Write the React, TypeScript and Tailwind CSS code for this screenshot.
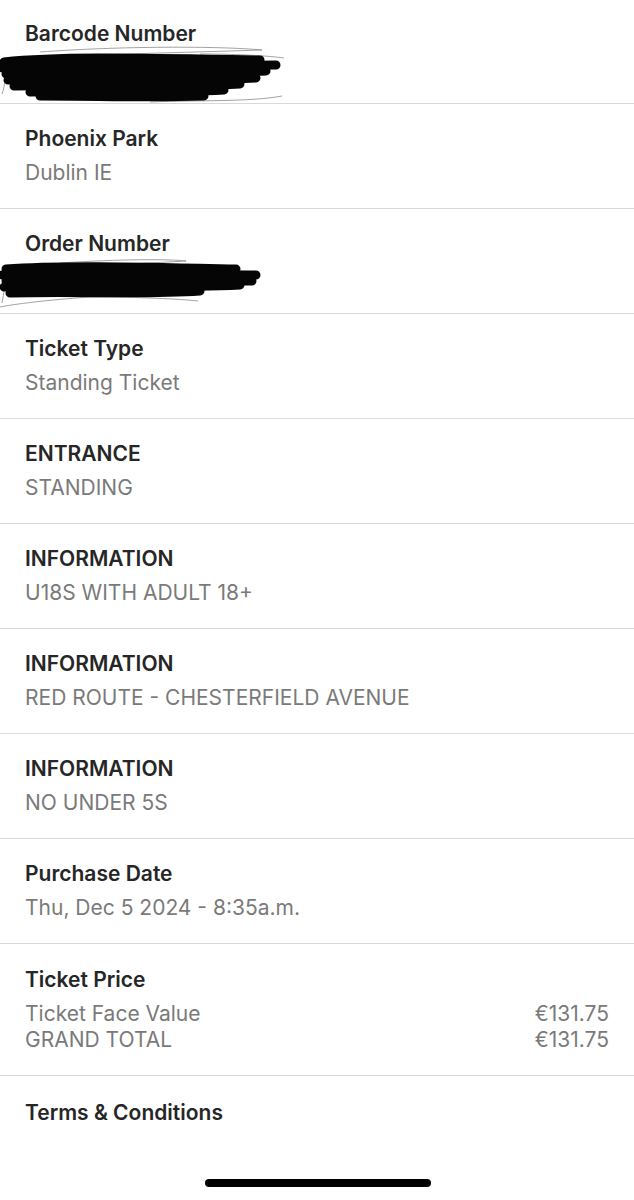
import React from "react";

const font = { fontFamily: "Inter, 'Noto Sans', Arial, sans-serif" };

function Scribble({ width, variant }: { width: number; variant: "a" | "b" }) {
  // a hand-drawn redaction mark
  const heavy =
    variant === "a"
      ? [
          "M4 18 C60 12 140 14 260 16",
          "M2 24 C80 20 170 22 276 21",
          "M6 30 C90 26 180 30 266 27",
          "M8 36 C70 34 160 38 256 34",
          "M14 42 C80 40 150 44 240 40",
          "M30 48 C90 46 150 50 224 46",
          "M40 52 C100 52 150 54 204 52",
        ]
      : [
          "M6 12 C60 8 140 10 236 12",
          "M2 18 C80 14 170 18 256 18",
          "M6 24 C90 20 180 24 252 24",
          "M4 30 C70 28 160 32 240 28",
          "M10 36 C80 34 140 38 200 34",
        ];
  const thin =
    variant === "a"
      ? [
          "M40 8 C120 2 220 2 262 6 C200 8 120 10 60 12",
          "M2 50 C6 40 4 30 10 24",
          "M150 58 C200 56 250 58 282 52",
          "M200 10 C240 10 270 12 284 14",
        ]
      : [
          "M60 6 C120 2 170 2 186 4 C150 6 110 8 70 10",
          "M0 50 C20 46 60 42 90 40 C140 40 180 42 198 44",
          "M2 46 C4 36 4 28 8 22",
        ];
  return (
    <svg width={width} height={60} viewBox={`0 0 ${width} 60`} className="block">
      {thin.map((d, i) => (
        <path key={"t" + i} d={d} fill="none" stroke="#8a8a8a" strokeWidth={0.8} />
      ))}
      {heavy.map((d, i) => (
        <path key={"h" + i} d={d} fill="none" stroke="#050505" strokeWidth={9} strokeLinecap="round" />
      ))}
    </svg>
  );
}

function Row({ title, value }: { title: string; value: string }) {
  return (
    <div className="h-[105px] border-b border-[#d9d9d9] pl-[25px] pt-[23px]">
      <div className="text-[21px] leading-6 font-semibold text-[#262626]">{title}</div>
      <div className="mt-[10px] text-[21px] leading-6 text-[#7a7a7a]">{value}</div>
    </div>
  );
}

function Redacted({ title, variant, width, top }: { title: string; variant: "a" | "b"; width: number; top: string }) {
  return (
    <div className="relative h-[105px] border-b border-[#d9d9d9] pl-[25px] pt-[23px]">
      <div className="text-[21px] leading-6 font-semibold text-[#262626]">{title}</div>
      <div className={"absolute left-0 " + top}>
        <Scribble width={width} variant={variant} />
      </div>
    </div>
  );
}

export default function App() {
  return (
    <div className="w-[634px] h-[1200px] bg-white relative overflow-hidden" style={font}>
      <div className="-mt-[1px]">
        <Redacted title="Barcode Number" variant="a" width={290} top="top-[45px]" />
      </div>
      <Row title="Phoenix Park" value="Dublin IE" />
      <Redacted title="Order Number" variant="b" width={262} top="top-[48px]" />
      <Row title="Ticket Type" value="Standing Ticket" />
      <Row title="ENTRANCE" value="STANDING" />
      <Row title="INFORMATION" value="U18S WITH ADULT 18+" />
      <Row title="INFORMATION" value="RED ROUTE - CHESTERFIELD AVENUE" />
      <Row title="INFORMATION" value="NO UNDER 5S" />
      <Row title="Purchase Date" value="Thu, Dec 5 2024 - 8:35a.m." />
      <div className="h-[132px] border-b border-[#d9d9d9] pl-[25px] pr-[25px] pt-[24px]">
        <div className="text-[21px] leading-6 font-semibold text-[#262626]">Ticket Price</div>
        <div className="mt-[9px] flex justify-between text-[21px] leading-[26px] text-[#7a7a7a]">
          <span>Ticket Face Value</span>
          <span>€131.75</span>
        </div>
        <div className="flex justify-between text-[21px] leading-[26px] text-[#7a7a7a]">
          <span>GRAND TOTAL</span>
          <span>€131.75</span>
        </div>
      </div>
      <div className="pl-[25px] pt-[25px]">
        <div className="text-[21px] leading-6 font-semibold text-[#262626]">Terms &amp; Conditions</div>
      </div>
      <div className="absolute left-[205px] top-[1179px] w-[226px] h-[8px] rounded-full bg-black" />
    </div>
  );
}
